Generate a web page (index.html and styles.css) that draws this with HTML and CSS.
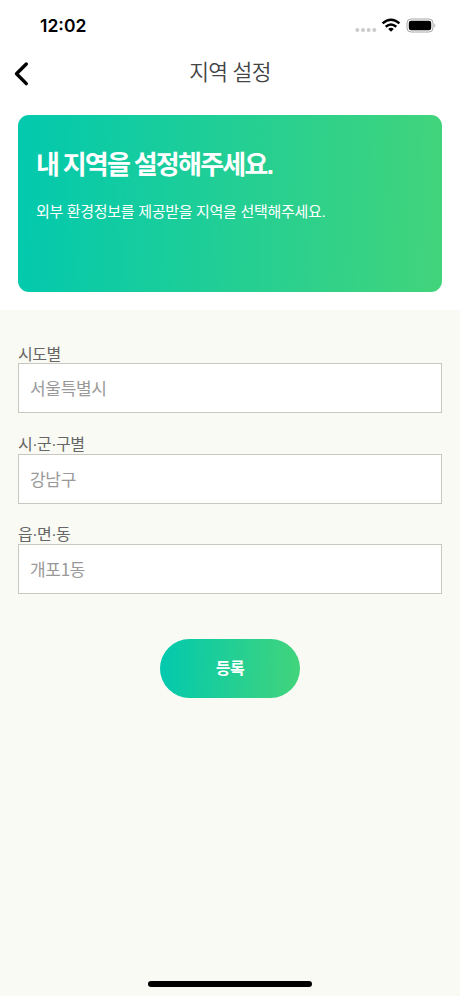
FILE: index.html
```html
<!DOCTYPE html>
<html lang="ko">
<head>
<meta charset="utf-8">
<title>지역 설정</title>
<link rel="stylesheet" href="styles.css">
</head>
<body>
<div class="screen">
  <div class="status">
    <span class="time">12:02</span>
    <svg class="indicators" width="82" height="18" viewBox="0 0 82 18">
      <g fill="#cbcbcb"><circle cx="3.300" cy="13" r="2"/><circle cx="9" cy="13" r="2"/><circle cx="14.700" cy="13" r="2"/><circle cx="20.300" cy="13" r="2"/></g>
      <g fill="none" stroke="#000" stroke-width="2.500"><path d="M28.600 6.400Q37 -1 45.400 6.400"/><path d="M31.700 9.800Q37 5.300 42.300 9.800"/></g>
      <path d="M34.200 12Q37 9.700 39.800 12L37 14.800Z"/>
      <rect x="53" y="2" width="26" height="13" rx="4" fill="none" stroke="#a6a6a6"/>
      <rect x="54.800" y="3.800" width="22.400" height="9.400" rx="2.300"/>
      <path d="M80.300 6.500Q82.300 8.500 80.300 10.500Z" fill="#a6a6a6"/>
    </svg>
  </div>
  <header class="nav">
    <svg class="back" width="16" height="26" viewBox="0 0 16 26"><path d="M13.300 3L3.500 12.800L13.300 22.600" fill="none" stroke="#000" stroke-width="3.400" stroke-linecap="round" stroke-linejoin="round"/></svg>
    <h1 class="title">지역 설정</h1>
  </header>
  <section class="card">
    <h2 class="card-title">내 지역을 설정해주세요.</h2>
    <p class="card-text">외부 환경정보를 제공받을 지역을 선택해주세요.</p>
  </section>
  <main class="form">
    <div class="field"><div class="label">시도별</div><div class="input">서울특별시</div></div>
    <div class="field"><div class="label">시·군·구별</div><div class="input">강남구</div></div>
    <div class="field"><div class="label">읍·면·동</div><div class="input">개포1동</div></div>
    <button class="submit">등록</button>
  </main>
  <div class="home"></div>
</div>
</body>
</html>
```
FILE: styles.css
```css
* { box-sizing: border-box; margin: 0; }
body { font-family: "Liberation Sans", "Noto Sans CJK KR", sans-serif; background: #f9faf3; }
.screen { height: 996px; display: flex; flex-direction: column; background: #fff; overflow: hidden; }
.status { height: 50px; flex: none; display: flex; justify-content: space-between; padding: 15px 24px 0 40px; }
.time { font: 600 17.500px/22px Inter, sans-serif; }
.indicators { margin-top: 2px; }
.nav { height: 64.500px; flex: none; display: grid; grid-template-columns: 40px 1fr 40px; }
.back { margin: 11px 0 0 12.500px; }
.title { padding-top: 1px; font-size: 21.500px; line-height: 44px; font-weight: 350; text-align: center; color: #444; letter-spacing: -.7px; }
.card { height: 177.500px; flex: none; margin: 0 18px 18px; padding: 31.500px 18px; border-radius: 11px; background: linear-gradient(92deg, #02c9ae, #42d47b); color: #fff; }
.card-title { font-size: 26px; line-height: 38px; font-weight: 700; letter-spacing: -1.750px; word-spacing: -1px; white-space: nowrap; }
.card-text { font-size: 15px; line-height: 22px; margin-top: 17px; letter-spacing: -.3px; white-space: nowrap; }
.form { flex: 1; background: #f9faf3; padding: 33px 18px 0; display: flex; flex-direction: column; }
.field { height: 90.500px; }
.label { height: 20px; font-size: 16px; line-height: 22px; color: #666; letter-spacing: -.5px; }
.field:first-child .label { line-height: 23px; }
.input { height: 50px; padding: 0 11px; border: 1px solid #c8c8c1; background: #fff; color: #999; font: 17px/48px "Noto Sans CJK KR", sans-serif; letter-spacing: -.3px; }
.submit { align-self: center; width: 140px; height: 58.500px; margin-top: 24.500px; padding: 0 0 3px; border: 0; border-radius: 30px; background: linear-gradient(92deg, #02c9ae, #42d47b); color: #fff; font: 700 16px/24px "Noto Sans CJK KR", sans-serif; letter-spacing: -.5px; }
.home { position: absolute; left: 148px; top: 981px; width: 164px; height: 6px; border-radius: 3px; background: #000; }
```
